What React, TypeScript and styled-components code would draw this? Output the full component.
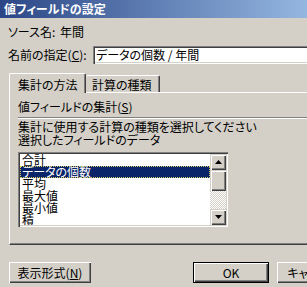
import React from 'react'
import styled, { createGlobalStyle } from 'styled-components'

const GlobalStyle = createGlobalStyle`
  html, body { margin: 0; padding: 0; background: #d4d0c8; }
  body {
    font-family: "Noto Sans CJK JP", "DejaVu Sans", sans-serif;
    font-size: 12px;
  }
`

const Viewport = styled.div`
  width: 307px;
  height: 287px;
  overflow: hidden;
`

const Dialog = styled.div`
  width: 360px;
  height: 287px;
  background: #d4d0c8;
  color: #000;
  display: flex;
  flex-direction: column;
  font-feature-settings: 'palt';
`

const TitleBar = styled.div`
  height: 18px;
  line-height: 18px;
  padding-left: 4px;
  background: linear-gradient(to right, #2b4686, #a6caf0);
  color: #fff;
  font-weight: bold;
  font-size: 12px;
`

const Body = styled.div`
  flex: 1;
  display: flex;
  flex-direction: column;
  padding-left: 8px;
`

const Row = styled.div<{ $top: number }>`
  display: flex;
  align-items: center;
  margin-top: ${(p) => p.$top}px;
  line-height: 14px;
`

const Label = styled.span<{ $w: number }>`
  width: ${(p) => p.$w}px;
  flex: none;
  white-space: nowrap;
`

const Field = styled.div`
  flex: 1;
  height: 18px;
  box-sizing: border-box;
  background: #fff;
  padding-left: 3px;
  line-height: 14px;
  box-shadow: inset 1px 1px #808080, inset 2px 2px #404040, inset -1px -1px #fff, inset -2px -2px #d4d0c8;
  display: flex;
  align-items: center;
`

const TabStrip = styled.div`
  display: flex;
  align-items: flex-end;
  margin-top: 9px;
  margin-left: 1px;
  height: 19px;
`

const Tab = styled.div<{ $active?: boolean }>`
  position: relative;
  z-index: ${(p) => (p.$active ? 1 : 0)};
  box-sizing: border-box;
  height: ${(p) => (p.$active ? 20 : 17)}px;
  margin-bottom: ${(p) => (p.$active ? -1 : 0)}px;
  padding: ${(p) => (p.$active ? '4px 0 0 8px' : '2px 0 0 6px')};
  width: ${(p) => (p.$active ? 77 : 74)}px;
  background: #d4d0c8;
  border-top: 1px solid #fff;
  border-left: ${(p) => (p.$active ? '1px solid #fff' : 'none')};
  border-right: 1px solid #404040;
  box-shadow: inset -1px 0 #808080;
  border-top-left-radius: 2px;
  border-top-right-radius: 2px;
  line-height: 14px;
  white-space: nowrap;
`

const Panel = styled.div`
  margin-left: 1px;
  height: 153px;
  box-sizing: border-box;
  border-top: 1px solid #fff;
  border-left: 1px solid #fff;
  border-bottom: 1px solid #404040;
  box-shadow: inset 0 -1px #808080;
  padding: 7px 0 0 8px;
  display: flex;
  flex-direction: column;
`

const Line = styled.div<{ $lh?: number }>`
  line-height: ${(p) => p.$lh ?? 14}px;
  white-space: nowrap;
`

const Etched = styled.div`
  height: 1px;
  margin: 3px 0 1px;
  background: #808080;
  border-bottom: 1px solid #fff;
`

const ListBox = styled.div`
  margin-top: 6px;
  width: 210px;
  height: 75px;
  box-sizing: border-box;
  padding: 2px;
  background: #fff;
  box-shadow: inset 1px 1px #808080, inset 2px 2px #404040, inset -1px -1px #fff, inset -2px -2px #d4d0c8;
  display: flex;
`

const Items = styled.div`
  flex: 1;
  overflow: hidden;
`

const Item = styled.div<{ $sel?: boolean }>`
  height: 12px;
  line-height: 12px;
  padding-left: 2px;
  background: ${(p) => (p.$sel ? '#0a246a' : 'transparent')};
  color: ${(p) => (p.$sel ? '#fff' : '#000')};
  outline: ${(p) => (p.$sel ? '1px dotted #d8c860' : 'none')};
  outline-offset: -1px;
`

const ScrollBar = styled.div`
  width: 16px;
  display: flex;
  flex-direction: column;
`

const Raised = styled.div<{ $h: number }>`
  height: ${(p) => p.$h}px;
  flex: none;
  background: #d4d0c8;
  box-shadow: inset 1px 1px #d4d0c8, inset 2px 2px #fff, inset -1px -1px #404040, inset -2px -2px #808080;
  display: flex;
  align-items: center;
  justify-content: center;
`

const Track = styled.div`
  flex: 1;
  background: repeating-conic-gradient(#fff 0 25%, #d4d0c8 0 50%) 0 0 / 2px 2px;
`

const ButtonRow = styled.div`
  display: flex;
  margin-top: 17px;
  margin-left: 1px;
`

const Button = styled.div<{ $w: number; $def?: boolean; $gap?: number }>`
  width: ${(p) => p.$w}px;
  height: 21px;
  flex: none;
  margin-left: ${(p) => p.$gap ?? 0}px;
  box-sizing: border-box;
  background: #d4d0c8;
  display: flex;
  align-items: center;
  justify-content: center;
  white-space: nowrap;
  line-height: 14px;
  border: ${(p) => (p.$def ? '1px solid #000' : 'none')};
  box-shadow: inset 1px 1px #fff, inset -1px -1px #404040, inset -2px -2px #808080;
`

const U = styled.span`
  text-decoration: underline;
`

const Arrow = ({ down }: { down?: boolean }) => (
  <svg width="7" height="4" viewBox="0 0 7 4">
    <path d={down ? 'M0 0H7L3.5 4Z' : 'M0 4H7L3.5 0Z'} fill="#000" />
  </svg>
)

const items = ['合計', 'データの個数', '平均', '最大値', '最小値', '積']

const App = () => (
  <Viewport>
    <GlobalStyle />
    <Dialog>
      <TitleBar>値フィールドの設定</TitleBar>
      <Body>
        <Row $top={7}>
          <Label $w={52}>ソース名:</Label>
          <span>年間</span>
        </Row>
        <Row $top={7}>
          <Label $w={85}>
            名前の指定(<U>C</U>):
          </Label>
          <Field>データの個数 / 年間</Field>
        </Row>
        <TabStrip>
          <Tab $active>集計の方法</Tab>
          <Tab>計算の種類</Tab>
        </TabStrip>
        <Panel>
          <Line>
            値フィールドの集計(<U>S</U>)
          </Line>
          <Etched />
          <Line $lh={13}>集計に使用する計算の種類を選択してください</Line>
          <Line $lh={13}>選択したフィールドのデータ</Line>
          <ListBox>
            <Items>
              {items.map((t, i) => (
                <Item key={t} $sel={i === 1}>
                  {t}
                </Item>
              ))}
            </Items>
            <ScrollBar>
              <Raised $h={16}>
                <Arrow />
              </Raised>
              <Raised $h={21} />
              <Track />
              <Raised $h={16}>
                <Arrow down />
              </Raised>
            </ScrollBar>
          </ListBox>
        </Panel>
        <ButtonRow>
          <Button $w={82}>
            表示形式(<U>N</U>)
          </Button>
          <Button $w={76} $def $gap={102}>
            OK
          </Button>
          <Button $w={75} $gap={8}>
            キャンセル
          </Button>
        </ButtonRow>
      </Body>
    </Dialog>
  </Viewport>
)

export default App
